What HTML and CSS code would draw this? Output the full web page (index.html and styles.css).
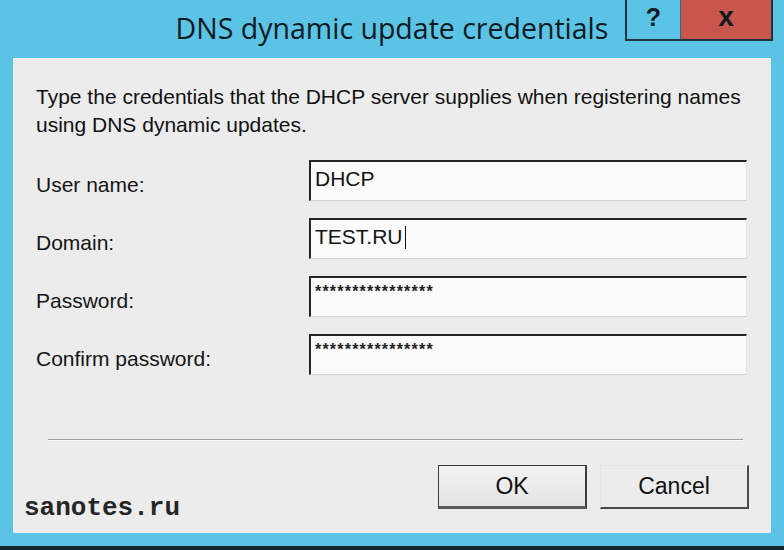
FILE: index.html
```html
<!DOCTYPE html>
<html lang="en">
<head>
<meta charset="utf-8">
<title>DNS dynamic update credentials</title>
<link rel="stylesheet" href="styles.css">
</head>
<body>
<div class="window">
  <div class="titlebar">
    <div class="spacer"></div>
    <h1 class="title">DNS dynamic update credentials</h1>
    <div class="caption-buttons">
      <span class="cb help">?</span>
      <span class="cb close">x</span>
    </div>
  </div>
  <div class="client">
    <p class="desc">Type the credentials that the DHCP server supplies when registering names using DNS dynamic updates.</p>
    <div class="form">
      <label class="label">User name:</label>
      <div class="field">DHCP</div>
      <label class="label">Domain:</label>
      <div class="field">TEST.RU<span class="caret"></span></div>
      <label class="label">Password:</label>
      <div class="field pw">****************</div>
      <label class="label">Confirm password:</label>
      <div class="field pw">****************</div>
    </div>
    <div class="sep"></div>
    <div class="footer">
      <span class="watermark">sanotes.ru</span>
      <div class="buttons">
        <button class="btn ok">OK</button>
        <button class="btn cancel">Cancel</button>
      </div>
    </div>
  </div>
</div>
<div class="edge"></div>
</body>
</html>
```
FILE: styles.css
```css
* { box-sizing: border-box; }
html, body { margin: 0; padding: 0; }
body {
  width: 784px;
  height: 550px;
  overflow: hidden;
  background: #5bc4e6;
  font-family: "Liberation Sans", Arial, sans-serif;
  color: #141414;
}
.window {
  height: 546px;
  padding: 0 13px 13px;
  display: flex;
  flex-direction: column;
}
.titlebar {
  height: 58px;
  margin: 0 -13px;
  padding: 0 11px;
  display: grid;
  grid-template-columns: 1fr auto 1fr;
}
.title {
  margin: 13px 0 0;
  font-family: "Open Sans", "Noto Sans", sans-serif;
  font-weight: 400;
  font-size: 28.5px;
  line-height: 30px;
  color: #0d1a20;
  white-space: nowrap;
}
.caption-buttons {
  justify-self: end;
  align-self: start;
  display: flex;
  height: 41px;
  border: 2px solid #1e3340;
  border-top: 0;
}
.cb {
  display: flex;
  align-items: center;
  justify-content: center;
  font-family: "Liberation Sans", Arial, sans-serif;
  font-weight: 700;
  color: #101a20;
}
.help {
  width: 54px;
  font-size: 25px;
  padding-bottom: 4px;
  border-right: 1px solid #3a6878;
}
.close {
  width: 90px;
  background: #c9564d;
  font-size: 28px;
  padding-bottom: 6px;
}
.client {
  flex: 1;
  background: #ececec;
  padding: 25px 24px 0 23px;
  display: flex;
  flex-direction: column;
}
.desc {
  margin: 0;
  font-size: 21px;
  line-height: 28px;
  color: #111;
}
.form {
  margin-top: 21px;
  display: grid;
  grid-template-columns: 273px 1fr;
  grid-auto-rows: 41px;
  row-gap: 17px;
  align-items: center;
}
.label {
  font-size: 21px;
  padding-top: 8px;
  color: #151515;
}
.field {
  height: 41px;
  background: #fbfbfb;
  border-top: 2px solid #262626;
  border-left: 2px solid #262626;
  border-right: 1px solid #e2e2e2;
  border-bottom: 1px solid #d4d4d4;
  padding: 5px 4px 0;
  font-size: 21px;
  line-height: 24px;
  color: #141414;
  display: flex;
  align-items: flex-start;
}
.caret {
  display: inline-block;
  width: 1px;
  height: 23px;
  background: #111;
  margin: 1px 0 0 2px;
}
.pw {
  padding-top: 2px;
  font-size: 16px;
  letter-spacing: 1.2px;
  font-weight: 700;
  color: #222;
}
.sep {
  margin: 64px 4px 0 12px;
  height: 2px;
  border-top: 1px solid #9c9c9c;
  border-bottom: 1px solid #fafafa;
}
.footer {
  margin: 24px -2px 0 -12px;
  display: flex;
  justify-content: space-between;
  align-items: flex-start;
}
.watermark {
  margin-top: 30px;
  font-family: "Liberation Mono", "Courier New", monospace;
  font-weight: 700;
  font-size: 26px;
  line-height: 26px;
  color: #262626;
}
.buttons {
  display: flex;
  gap: 13px;
}
.btn {
  width: 149px;
  height: 44px;
  margin: 0;
  font-family: "Liberation Sans", Arial, sans-serif;
  font-size: 23px;
  color: #111;
  background: #ececec;
  padding: 0;
}
.ok {
  background: linear-gradient(#f2f2f2, #e4e4e4);
  border: 1px solid #3c3c3c;
  border-right-width: 2px;
  border-bottom: 3px solid #5a5a5a;
}
.cancel {
  border: 1px solid #e6e6e6;
  border-right: 2px solid #4a4a4a;
  border-bottom: 2px solid #4a4a4a;
}
.edge {
  height: 4px;
  background: #14252e;
}
```
